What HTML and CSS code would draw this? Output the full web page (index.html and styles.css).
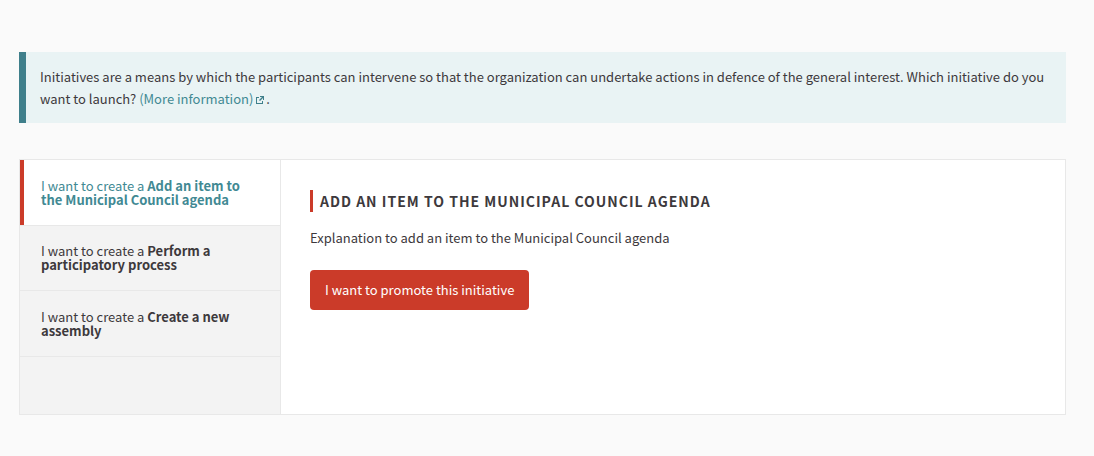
FILE: index.html
```html
<!DOCTYPE html>
<html lang="en">
<head>
<meta charset="utf-8">
<meta name="viewport" content="width=device-width, initial-scale=1">
<title>Initiatives</title>
<link rel="stylesheet" href="styles.css">
</head>
<body>
<main class="page">
  <div class="callout">
    <p class="callout-text">Initiatives are a means by which the participants can intervene so that the organization can undertake actions in defence of the general interest. Which initiative do you want to launch? <a class="link" href="#info">(More information) <svg class="external" viewBox="0 0 8 8" aria-hidden="true"><path d="M0 1h3v1H1v5h5V5h1v3H0zM4 0h4v4H7V2L4 5 3 4l3-3H4z"/></svg></a>.</p>
  </div>
  <div class="panel">
    <ul class="tabs">
      <li class="tab-item"><a class="tab tab-active" href="#agenda">I want to create a <strong>Add an item to the Municipal Council agenda</strong></a></li>
      <li class="tab-item"><a class="tab" href="#process">I want to create a <strong>Perform a participatory process</strong></a></li>
      <li class="tab-item"><a class="tab" href="#assembly">I want to create a <strong>Create a new assembly</strong></a></li>
    </ul>
    <section class="content" id="agenda">
      <h2 class="heading">Add an item to the Municipal Council agenda</h2>
      <p class="description">Explanation to add an item to the Municipal Council agenda</p>
      <button class="button" type="button">I want to promote this initiative</button>
    </section>
  </div>
</main>
</body>
</html>
```
FILE: styles.css
```css
* { box-sizing: border-box; }
body {
  margin: 0;
  background: #fafafa;
  color: #3d393c;
  font-family: "Source Sans Pro", "Noto Sans CJK SC", "Noto Sans", sans-serif;
  font-size: 13px;
}
.page { padding: 52px 28px 41px 19px; }
.callout {
  margin-bottom: 36px;
  padding: 14px 15px 13px 14px;
  border-left: 7px solid #3f7f8b;
  background: #e9f3f4;
}
.callout-text { margin: 0; line-height: 22px; }
.link { color: #418993; text-decoration: none; }
.external { width: 8px; height: 8px; margin: 0 2px 0 0; fill: #3f7f8b; }
.panel {
  display: flex;
  min-height: 256px;
  border: 1px solid #e8e8e8;
  background: #fff;
}
.tabs {
  flex: 0 0 261px;
  margin: 0;
  padding: 0;
  border-right: 1px solid #e8e8e8;
  background: #f3f3f3;
  list-style: none;
}
.tab-item { border-bottom: 1px solid #e8e8e8; }
.tab {
  display: block;
  padding: 18px 32px 18px 21px;
  color: inherit;
  line-height: 14px;
  text-decoration: none;
}
.tab-item:nth-child(odd) .tab { padding-top: 19px; }
.tab strong { font-weight: 700; }
.tab-active {
  padding-left: 17px;
  border-left: 4px solid #cb3b29;
  background: #fff;
  color: #418993;
}
.content { flex: 1; padding: 30px 29px; }
.heading {
  margin: 0 0 15px;
  padding-left: 7px;
  border-left: 3px solid #cb3b29;
  font-size: 14px;
  font-weight: 700;
  line-height: 22px;
  letter-spacing: 1px;
  text-transform: uppercase;
}
.description { margin: 0 0 21px; line-height: 22px; }
.button {
  height: 40px;
  padding: 0 15px 2px;
  border: 0;
  border-radius: 4px;
  background: #cb3b29;
  color: #fff;
  font: inherit;
}
```
